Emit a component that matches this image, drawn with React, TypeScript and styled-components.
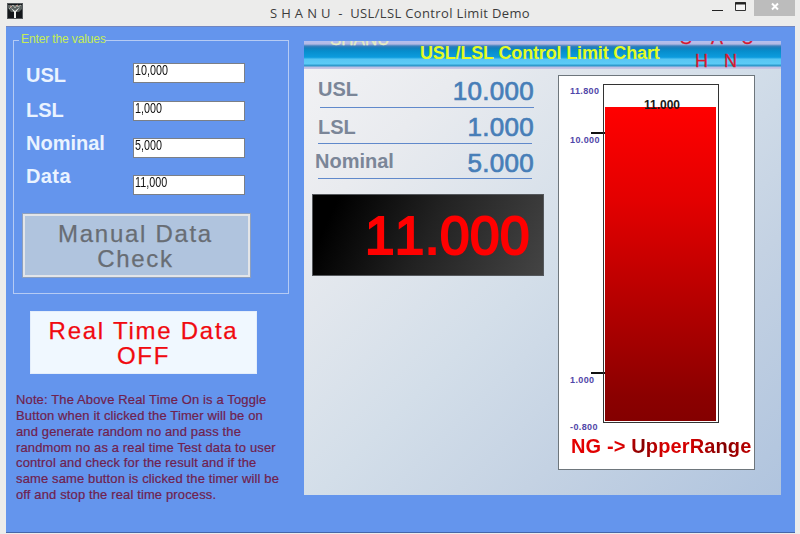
import React from "react";
import styled, { createGlobalStyle } from "styled-components";

const GlobalStyle = createGlobalStyle`
  * { box-sizing: border-box; }
  body { margin: 0; overflow: hidden; background: #ececeb; }
`;

const Window = styled.div`
  width: 800px;
  height: 534px;
  display: flex;
  flex-direction: column;
  padding: 0 5px 1px 6px;
  background: #ececeb;
  font-family: "Liberation Sans", sans-serif;
  white-space: nowrap;
`;

const TitleBar = styled.header`
  height: 26px;
  flex: none;
  display: flex;
  align-items: flex-start;
`;

const AppIcon = styled.svg`
  margin: 3px 0 0 1px;
  flex: none;
`;

const WindowTitle = styled.h1`
  margin: 3px 0 0 247px;
  width: 430px;
  font: 400 13px/20px "Open Sans", sans-serif;
  letter-spacing: 0.35px;
  white-space: pre;
  color: #3c3c3c;
`;

const Controls = styled.div`
  display: flex;
  margin-left: auto;
`;

const CloseButton = styled.div`
  width: 41px;
  height: 16px;
  background: #bcbcbc;
  display: flex;
  justify-content: center;
  padding-top: 2px;
`;

const Client = styled.main`
  flex: 1;
  display: flex;
  background: #6495ed;
  border-bottom: 1px solid #4766a8;
  border-top: 1px solid #7186c0;
`;

const Sidebar = styled.section`
  width: 298px;
  flex: none;
  padding: 13px 0 0 7px;
`;

const GroupBox = styled.div`
  width: 276px;
  height: 254px;
  border: 1px solid #b5cbf4;
  margin-bottom: 17px;
`;

const Legend = styled.div`
  width: 87px;
  height: 16px;
  margin: -10px 0 0 5px;
  padding-left: 2px;
  background: #6495ed;
  font-size: 12px;
  line-height: 16px;
  letter-spacing: -0.12px;
  color: #c5ed55;
`;

const Fields = styled.div`
  display: grid;
  grid-template-columns: 107px 112px;
  grid-template-rows: 38px 37px 37px 30px;
  margin: 16px 0 0 12px;
`;

const FieldLabel = styled.label<{ $top: number; $spacing?: number }>`
  height: 24px;
  margin-top: ${(p) => p.$top}px;
  font-size: 20px;
  font-weight: 700;
  line-height: 24px;
  letter-spacing: ${(p) => p.$spacing ?? 0}px;
  color: #eaf3ff;
`;

const FieldBox = styled.div`
  width: 112px;
  height: 20px;
  background: #fff;
  border: 1px solid #7b7f86;
  padding-left: 1px;
`;

const FieldText = styled.span`
  display: block;
  margin-top: -1px;
  font-size: 14px;
  line-height: 14px;
  color: #111;
  transform: scaleX(0.77);
  transform-origin: 0 0;
`;

const BigButton = styled.button<{ $live?: boolean }>`
  display: block;
  width: ${(p) => (p.$live ? 227 : 229)}px;
  height: ${(p) => (p.$live ? 63 : 65)}px;
  margin: ${(p) => (p.$live ? "0 0 0 17px" : "8px 0 0 8px")};
  padding: ${(p) => (p.$live ? "1px 0 0" : "0 2px 0 0")};
  border: ${(p) => (p.$live ? "1px solid #e4eefb" : "3px solid #e3e5e8")};
  outline: ${(p) => (p.$live ? "none" : "1px solid #8d9fbd")};
  outline-offset: -1px;
  background: ${(p) => (p.$live ? "#f0f8ff" : "#b0c4de")};
  color: ${(p) => (p.$live ? "#f00a10" : "#686d74")};
  font: 400 24px/25px "Liberation Sans", sans-serif;
  letter-spacing: ${(p) => (p.$live ? 1.75 : 1.7)}px;
  -webkit-text-stroke: 0.25px;
`;

const Note = styled.p`
  margin: 18px 0 0 3px;
  font-size: 13px;
  line-height: 15.85px;
  letter-spacing: 0.13px;
  color: #70214e;
  -webkit-text-stroke: 0.2px #70214e;
`;

const NoteLine = styled.span`
  display: block;
`;

const ChartPanel = styled.section`
  width: 477px;
  height: 454px;
  margin-top: 14px;
  background: linear-gradient(135deg, #f3f3f5 0%, #e9ebef 20%, #d3dee9 50%, #c4d2e3 72%, #b0c4de 100%);
`;

const Banner = styled.div`
  height: 28px;
  position: relative;
  overflow: hidden;
  background: linear-gradient(
    #b4bfee 0px, #b4b9e4 3px, #3b80bd 5px, #147fbd 7px, #078dcc 10px,
    #0c9bdd 16px, #20a8e5 17px, #58c5f2 18px, #5ccbf7 23px, #319fd0 24px,
    #2f97c9 25px, #b8bde4 26px, #cdc7e4 28px
  );
`;

const BannerTitle = styled.h2`
  margin: 0 0 0 116px;
  font-size: 18px;
  line-height: 24px;
  font-weight: 700;
  letter-spacing: -0.15px;
  color: #e4fb24;
`;

const Marquee = styled.span<{ $x: number; $y: number; $color: string; $size?: number }>`
  position: absolute;
  left: ${(p) => p.$x}px;
  top: ${(p) => p.$y}px;
  font-size: ${(p) => p.$size ?? 18}px;
  line-height: 20px;
  color: ${(p) => p.$color};
  -webkit-text-stroke: 0.3px;
`;

const PanelBody = styled.div`
  display: flex;
`;

const Readings = styled.div`
  width: 254px;
  padding: 5px 0 0 8px;
`;

const Reading = styled.div<{ $height: number; $shift?: number }>`
  width: 214px;
  height: ${(p) => p.$height}px;
  margin-left: ${(p) => 6 + (p.$shift ?? 0)}px;
  border-bottom: 1px solid #6089cb;
  display: flex;
  justify-content: space-between;
`;

const ReadingName = styled.span<{ $top: number; $left: number }>`
  height: 24px;
  margin: ${(p) => p.$top}px 0 0 ${(p) => p.$left}px;
  font-size: 20px;
  line-height: 24px;
  font-weight: 700;
  color: #7b8698;
`;

const ReadingValue = styled.span<{ $top: number; $right: number }>`
  height: 30px;
  margin: ${(p) => p.$top}px ${(p) => p.$right}px 0 0;
  font-size: 26px;
  line-height: 30px;
  letter-spacing: 0.3px;
  color: #477eb8;
  -webkit-text-stroke: 0.7px #477eb8;
`;

const Display = styled.div`
  width: 232px;
  height: 82px;
  margin-top: 15px;
  padding: 0 13px 0 0;
  border: 1px solid #55585c;
  background: linear-gradient(115deg, #000 10%, #222 50%, #444 100%);
  color: #f00;
  text-align: right;
  font-size: 53px;
  line-height: 81px;
  letter-spacing: 0.5px;
  font-kerning: none;
  -webkit-text-stroke: 2.2px #f00;
`;

const Gauge = styled.div`
  width: 197px;
  height: 395px;
  margin-top: 6px;
  background: #fff;
  border: 1px solid #6e767c;
`;

const GaugeArea = styled.div`
  display: flex;
  height: 358px;
`;

const Scale = styled.div`
  width: 44px;
  padding: 8px 0 0 11px;
  display: flex;
  flex-direction: column;
`;

const ScaleLabel = styled.span<{ $gap: number }>`
  height: 12px;
  margin-top: ${(p) => p.$gap}px;
  font-size: 9px;
  line-height: 12px;
  font-weight: 700;
  letter-spacing: 0.4px;
  color: #5146a8;
`;

const Tick = styled.i<{ $gap: number }>`
  width: 14px;
  height: 2px;
  margin: ${(p) => p.$gap}px 0 0 21px;
  background: #111;
  flex: none;
  position: relative;
`;

const Track = styled.div`
  width: 116px;
  height: 339px;
  margin-top: 8px;
  border: 1px solid #333;
  padding: 22px 2px 1px 1px;
  position: relative;
`;

const Fill = styled.div`
  height: 100%;
  background: linear-gradient(#ff0000, #e30000 30%, #8b0000 92%, #840000);
`;

const FillValue = styled.span`
  position: absolute;
  top: 13px;
  left: 0;
  width: 114px;
  text-align: center;
  font-size: 12px;
  line-height: 14px;
  font-weight: 700;
  color: #181818;
  padding-left: 2px;
`;

const Verdict = styled.div`
  width: 183px;
  margin-left: 12px;
  font-size: 20px;
  line-height: 24px;
  font-weight: 700;
  letter-spacing: 0.13px;
  color: transparent;
  background: linear-gradient(100deg, #e50000 0%, #dc0000 28%, #860000 39%, #dc0000 52%, #d00000 65%, #820000 83%, #cb0000 100%);
  background-clip: text;
  -webkit-background-clip: text;
`;

const noteLines = [
  "Note: The Above Real Time On is a Toggle",
  "Button when it clicked the Timer will be on",
  "and generate random no and pass the",
  "randmom no as a real time Test data to user",
  "control and check for the result and if the",
  "same same button is clicked the timer will be",
  "off and stop the real time process.",
];

const fields = [
  { name: "USL", value: "10,000", top: 0 },
  { name: "LSL", value: "1,000", top: -3 },
  { name: "Nominal", value: "5,000", top: -7 },
  { name: "Data", value: "11,000", top: -11, spacing: 0.4 },
];

export default function App() {
  return (
    <>
      <GlobalStyle />
      <Window>
        <TitleBar>
          <AppIcon width="16" height="16" viewBox="0 0 16 16">
            <rect x="0.5" y="0.5" width="15" height="15" fill="#14171b" stroke="#55595c" />
            <path d="M1 2h14v4l-3 3H4L1 5z" fill="#59605f" />
            <path d="M2 6l4-4 2 3 2-3 1 2 3-2" fill="none" stroke="#a9b0aa" />
            <path d="M4 5l3 4v6h2V9l4-5-5 4z" fill="#f1f3f1" />
            <path d="M3 3l2 1M9 3l2-1" stroke="#c5958c" />
          </AppIcon>
          <WindowTitle>{"S H A N U  -  USL/LSL Control Limit Demo"}</WindowTitle>
          <Controls>
            <svg width="42" height="16" viewBox="0 0 42 16">
              <path d="M0 10.5h11" stroke="#222" />
              <path d="M23.5 2.5h10v8h-10z" fill="#f5f5f5" stroke="#333" />
              <path d="M23 3.5h11" stroke="#222" strokeWidth="2" />
            </svg>
            <CloseButton>
              <svg width="10" height="10" viewBox="0 0 10 10">
                <path d="M2 1.5l6 6M8 1.5l-6 6" stroke="#fff" strokeWidth="2" />
              </svg>
            </CloseButton>
          </Controls>
        </TitleBar>
        <Client>
          <Sidebar>
            <GroupBox>
              <Legend>Enter the values</Legend>
              <Fields>
                {fields.map((f) => (
                  <React.Fragment key={f.name}>
                    <FieldLabel $top={f.top} $spacing={f.spacing}>{f.name}</FieldLabel>
                    <FieldBox><FieldText>{f.value}</FieldText></FieldBox>
                  </React.Fragment>
                ))}
              </Fields>
              <BigButton disabled>Manual Data<br />Check</BigButton>
            </GroupBox>
            <BigButton $live>Real Time Data<br />OFF</BigButton>
            <Note>
              {noteLines.map((text) => (
                <NoteLine key={text}>{text}</NoteLine>
              ))}
            </Note>
          </Sidebar>
          <ChartPanel>
            <Banner>
              <Marquee $x={26} $y={-11} $color="#e6ebc4" $size={17}>SHANU</Marquee>
              <BannerTitle>USL/LSL Control Limit Chart</BannerTitle>
              <Marquee $x={376} $y={-13} $color="#d81830">S</Marquee>
              <Marquee $x={391} $y={10} $color="#d81830">H</Marquee>
              <Marquee $x={407} $y={-13} $color="#d81830">A</Marquee>
              <Marquee $x={420} $y={10} $color="#d81830">N</Marquee>
              <Marquee $x={437} $y={-13} $color="#d81830">U</Marquee>
            </Banner>
            <PanelBody>
              <Readings>
                <Reading $height={34} $shift={2}>
                  <ReadingName $top={3} $left={-2}>USL</ReadingName>
                  <ReadingValue $top={2} $right={0}>10.000</ReadingValue>
                </Reading>
                <Reading $height={36}>
                  <ReadingName $top={7} $left={0}>LSL</ReadingName>
                  <ReadingValue $top={4} $right={-2}>1.000</ReadingValue>
                </Reading>
                <Reading $height={35}>
                  <ReadingName $top={5} $left={-3}>Nominal</ReadingName>
                  <ReadingValue $top={4} $right={-2}>5.000</ReadingValue>
                </Reading>
                <Display>11.000</Display>
              </Readings>
              <Gauge>
                <GaugeArea>
                  <Scale>
                    <ScaleLabel $gap={1}>11.800</ScaleLabel>
                    <Tick $gap={35} />
                    <ScaleLabel $gap={0}>10.000</ScaleLabel>
                    <Tick $gap={226} />
                    <ScaleLabel $gap={0}>1.000</ScaleLabel>
                    <ScaleLabel $gap={35}>-0.800</ScaleLabel>
                  </Scale>
                  <Track>
                    <Fill />
                    <FillValue>11.000</FillValue>
                  </Track>
                </GaugeArea>
                <Verdict>NG -&gt; UpperRange</Verdict>
              </Gauge>
            </PanelBody>
          </ChartPanel>
        </Client>
      </Window>
    </>
  );
}
